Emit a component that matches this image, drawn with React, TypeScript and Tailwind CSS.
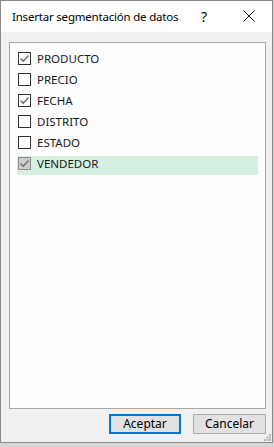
import React from "react";

const fields = [
  { name: "PRODUCTO", checked: true },
  { name: "PRECIO", checked: false },
  { name: "FECHA", checked: true },
  { name: "DISTRITO", checked: false },
  { name: "ESTADO", checked: false },
  { name: "VENDEDOR", checked: true, active: true },
];

function Check({ checked, active }: { checked: boolean; active?: boolean }) {
  return (
    <div
      className={
        "w-[13px] h-[13px] border flex items-center justify-center " +
        (active ? "border-[#8c8c8c] bg-[#cccccc]" : "border-[#333333] bg-white")
      }
    >
      {checked && (
        <svg width="11" height="11" viewBox="0 0 11 11">
          <path d="M1.5 5.5 L4.2 8.2 L9.5 2.5" fill="none" stroke={active ? "#6d6d6d" : "#666666"} strokeWidth="1.3" />
        </svg>
      )}
    </div>
  );
}

export default function App() {
  return (
    <div className="w-[274px] h-[447px] bg-[#d6d6d6] overflow-hidden" style={{ fontFamily: '"Noto Sans", "Open Sans", sans-serif' }}>
      <div className="w-[273px] h-[443px] border border-[#8a8a8a] bg-[#f0f0f0] flex flex-col">
        {/* title bar */}
        <div className="h-[31px] bg-white flex items-center pl-[11px] text-[11.5px] text-black">
          <span className="flex-1 tracking-[-0.2px]">Insertar segmentación de datos</span>
          <span className="w-[20px] text-[14px] mr-[29px] text-center">?</span>
          <svg width="12" height="12" viewBox="0 0 12 12" className="mr-[17px]">
            <path d="M0.5 0.5 L11.5 11.5 M11.5 0.5 L0.5 11.5" stroke="#111" strokeWidth="1" />
          </svg>
        </div>

        {/* list */}
        <div className="mt-[10px] ml-[8px] w-[257px] h-[368px] border border-[#a9a9a9] bg-[#fdfdfd] pt-[8px] flex flex-col gap-[2px]">
          {fields.map((f) => (
            <div
              key={f.name}
              className={
                "mx-[7px] h-[19px] flex items-start pl-[1px] gap-[6px] " +
                (f.active ? "bg-[#d3f0e0]" : "")
              }
            >
              <div className="pt-[1px]">
                <Check checked={f.checked} active={f.active} />
              </div>
              <span className="text-[11.5px] leading-[16px] text-[#1a1a1a]">{f.name}</span>
            </div>
          ))}
        </div>

        {/* buttons */}
        <div className="flex justify-end gap-[12px] mt-[5px] pr-[6px] relative">
          <button className="w-[72px] h-[20px] border-2 border-[#0078d7] bg-[#e1e1e1] text-[12px] leading-[16px] text-black">
            Aceptar
          </button>
          <button className="w-[73px] h-[20px] border border-[#adadad] bg-[#e1e1e1] text-[12px] leading-[18px] text-black">
            Cancelar
          </button>
        </div>
        <div className="flex justify-end pr-[1px] mt-auto mb-[1px]">
          <svg width="7" height="7" viewBox="0 0 7 7">
            <rect x="5" y="0" width="2" height="2" fill="#b8b8b8" />
            <rect x="2.5" y="2.5" width="2" height="2" fill="#b8b8b8" />
            <rect x="5" y="2.5" width="2" height="2" fill="#b8b8b8" />
            <rect x="0" y="5" width="2" height="2" fill="#b8b8b8" />
            <rect x="2.5" y="5" width="2" height="2" fill="#b8b8b8" />
            <rect x="5" y="5" width="2" height="2" fill="#b8b8b8" />
          </svg>
        </div>
      </div>
    </div>
  );
}
